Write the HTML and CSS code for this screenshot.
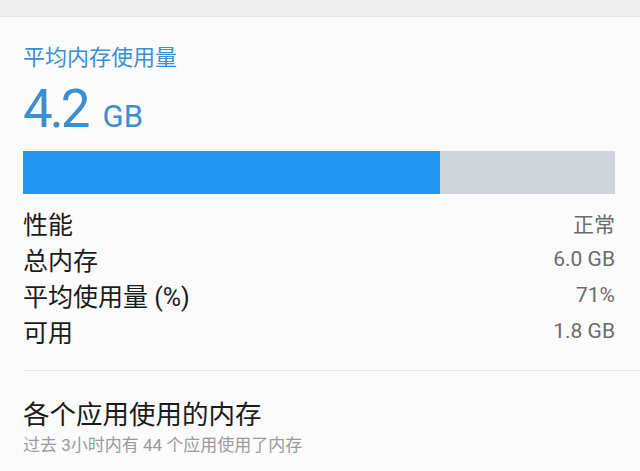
FILE: index.html
```html
<!DOCTYPE html>
<html lang="zh">
<head>
<meta charset="utf-8">
<link rel="stylesheet" href="styles.css">
</head>
<body>
<div class="topband"></div>
<main class="card">
  <section class="summary">
    <h1 class="title">平均内存使用量</h1>
    <div class="amount"><span class="num">4.2</span><span class="unit">GB</span></div>
    <div class="bar"><div class="bar-fill" style="width: 70.5%"></div></div>
    <ul class="stats">
      <li class="row"><span class="label">性能</span><span class="value">正常</span></li>
      <li class="row"><span class="label">总内存</span><span class="value">6.0 GB</span></li>
      <li class="row"><span class="label">平均使用量 (%)</span><span class="value">71%</span></li>
      <li class="row"><span class="label">可用</span><span class="value">1.8 GB</span></li>
    </ul>
  </section>
  <section class="apps">
    <h2 class="apps-title">各个应用使用的内存</h2>
    <p class="apps-sub">过去 3小时内有 44 个应用使用了内存</p>
  </section>
</main>
</body>
</html>
```
FILE: styles.css
```css
* { box-sizing: border-box; }
html, body {
  margin: 0;
  padding: 0;
  background: #fbfbfb;
  font-family: Roboto, "Noto Sans CJK SC", sans-serif;
  width: 640px;
  height: 471px;
  overflow: hidden;
}
.topband {
  height: 17px;
  background: #efefef;
  border-bottom: 1px solid #e6e6e6;
}
.card {
  display: flex;
  flex-direction: column;
}
.summary {
  margin-left: 23px;
  padding: 27px 25px 21px 0;
  border-bottom: 1px solid #e4e4e4;
}
.title {
  margin: 0;
  font-size: 22px;
  font-weight: 400;
  color: #3a8fd3;
  line-height: 28px;
}
.amount {
  display: flex;
  align-items: baseline;
  gap: 15px;
  color: #3a8fd3;
  margin-top: 10px;
  height: 54px;
  line-height: 54px;
}
.num {
  font-size: 53px;
  font-weight: 400;
  letter-spacing: -3px;
}
.unit {
  font-size: 31px;
}
.bar {
  margin-top: 15px;
  height: 43px;
  background: #cfd5da;
  display: flex;
}
.bar-fill {
  background: #2196f3;
  height: 100%;
}
.stats {
  list-style: none;
  margin: 11px 0 0 0;
  padding: 0;
  display: flex;
  flex-direction: column;
}
.row {
  display: flex;
  justify-content: space-between;
  align-items: center;
  height: 36px;
}
.label {
  font-size: 25px;
  color: #1a1a1a;
}
.value {
  font-size: 21px;
  color: #6b6b6b;
}
.apps {
  padding: 27px 23px 0 23px;
}
.apps-title {
  margin: 0;
  font-size: 26.5px;
  font-weight: 400;
  color: #1a1a1a;
  line-height: 34px;
}
.apps-sub {
  margin: 1px 0 0 0;
  font-size: 17px;
  color: #9a9a9a;
  line-height: 24px;
}
```
